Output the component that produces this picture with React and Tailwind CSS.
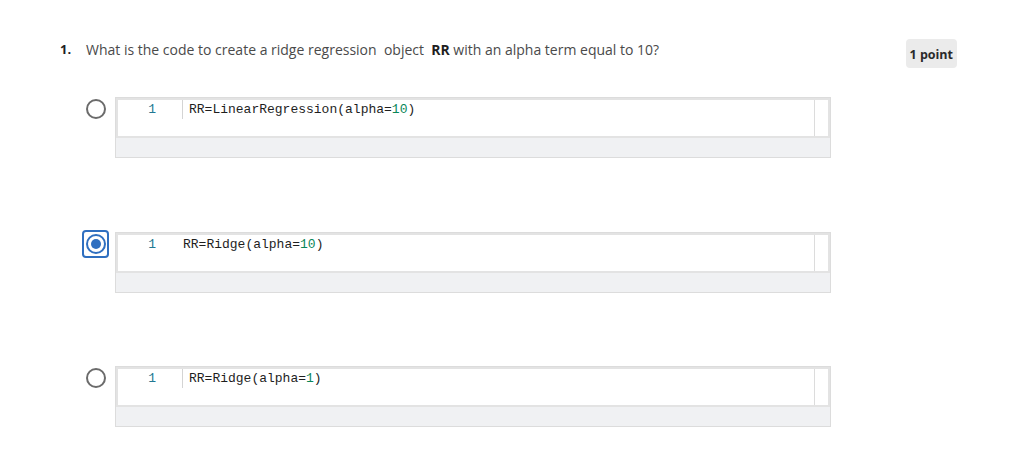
import React from "react";

function Radio({ checked }) {
  return (
    <div
      className={
        checked
          ? "w-[27px] h-[28px] flex items-center justify-center rounded-[4px] border-2 border-[#2f6fc0]"
          : "w-[27px] h-[28px] flex items-center justify-center rounded-[4px] border-2 border-transparent"
      }
    >
      <div
        className={
          checked
            ? "w-[20px] h-[20px] rounded-full border-2 border-[#2f6fc0] flex items-center justify-center"
            : "w-[20px] h-[20px] rounded-full border-2 border-[#6b6b6b] flex items-center justify-center"
        }
      >
        {checked && <div className="w-[10px] h-[10px] rounded-full bg-[#2f6fc0]" />}
      </div>
    </div>
  );
}

function CodeBox({ pre, num, post, cursor }) {
  return (
    <div className="w-[716px] border border-[#dcdcdc] bg-[#f0f1f3]">
      <div className="h-[40px] flex border-2 border-[#e3e3e3] bg-white">
        <div className="flex-1 flex items-start">
          <div className="w-[38px] text-right text-[#237893] h-[19px] leading-[19px] text-[13px]">1</div>
          {cursor ? (
            <>
              <div className="ml-[26px] w-px h-[19px] bg-[#d4d4d4]" />
              <div className="ml-[6px] h-[19px] leading-[19px] text-[13px] text-[#1e1e1e] whitespace-pre">
                {pre}
                <span className="text-[#098658]">{num}</span>
                {post}
              </div>
            </>
          ) : (
            <div className="ml-[27px] h-[19px] leading-[19px] text-[13px] text-[#1e1e1e] whitespace-pre">
              {pre}
              <span className="text-[#098658]">{num}</span>
              {post}
            </div>
          )}
        </div>
        <div className="w-[14px] border-l border-[#dcdcdc]" />
      </div>
      <div className="h-[19px]" />
    </div>
  );
}

export default function App() {
  const options = [
    { pre: "RR=LinearRegression(alpha=", num: "10", post: ")", cursor: true, checked: false },
    { pre: "RR=Ridge(alpha=", num: "10", post: ")", cursor: false, checked: true },
    { pre: "RR=Ridge(alpha=", num: "1", post: ")", cursor: true, checked: false },
  ];
  return (
    <div className="w-[1009px] h-[465px] bg-white overflow-hidden" style={{ fontFamily: "'Open Sans', sans-serif" }}>
      <div className="flex items-start justify-between pl-[60px] pr-[52px] pt-[39px]">
        <div className="flex items-start text-[14px] leading-[21px]">
          <span className="font-bold text-[#1f1f1f] w-[26px] text-[13px]">1.</span>
          <span className="text-[#4a4a4a]">
            What is the code to create a ridge regression&nbsp; object&nbsp; <b className="text-[#1f1f1f]">RR</b> with an alpha term equal to 10?
          </span>
        </div>
        <div className="h-[29px] px-[4px] pt-[3px] flex items-center rounded-[4px] bg-[#ebebeb] text-[12.5px] font-bold text-[#2a2a2a]">
          1 point
        </div>
      </div>
      <div className="flex flex-col gap-[73.5px] pl-[82px] pt-[29px]">
        {options.map((o, i) => (
          <div key={i} className="flex items-start gap-[6px]">
            <div className="-mt-[2px]">
              <Radio checked={o.checked} />
            </div>
            <div style={{ fontFamily: "'Liberation Mono', monospace" }}>
              <CodeBox pre={o.pre} num={o.num} post={o.post} cursor={o.cursor} />
            </div>
          </div>
        ))}
      </div>
    </div>
  );
}
